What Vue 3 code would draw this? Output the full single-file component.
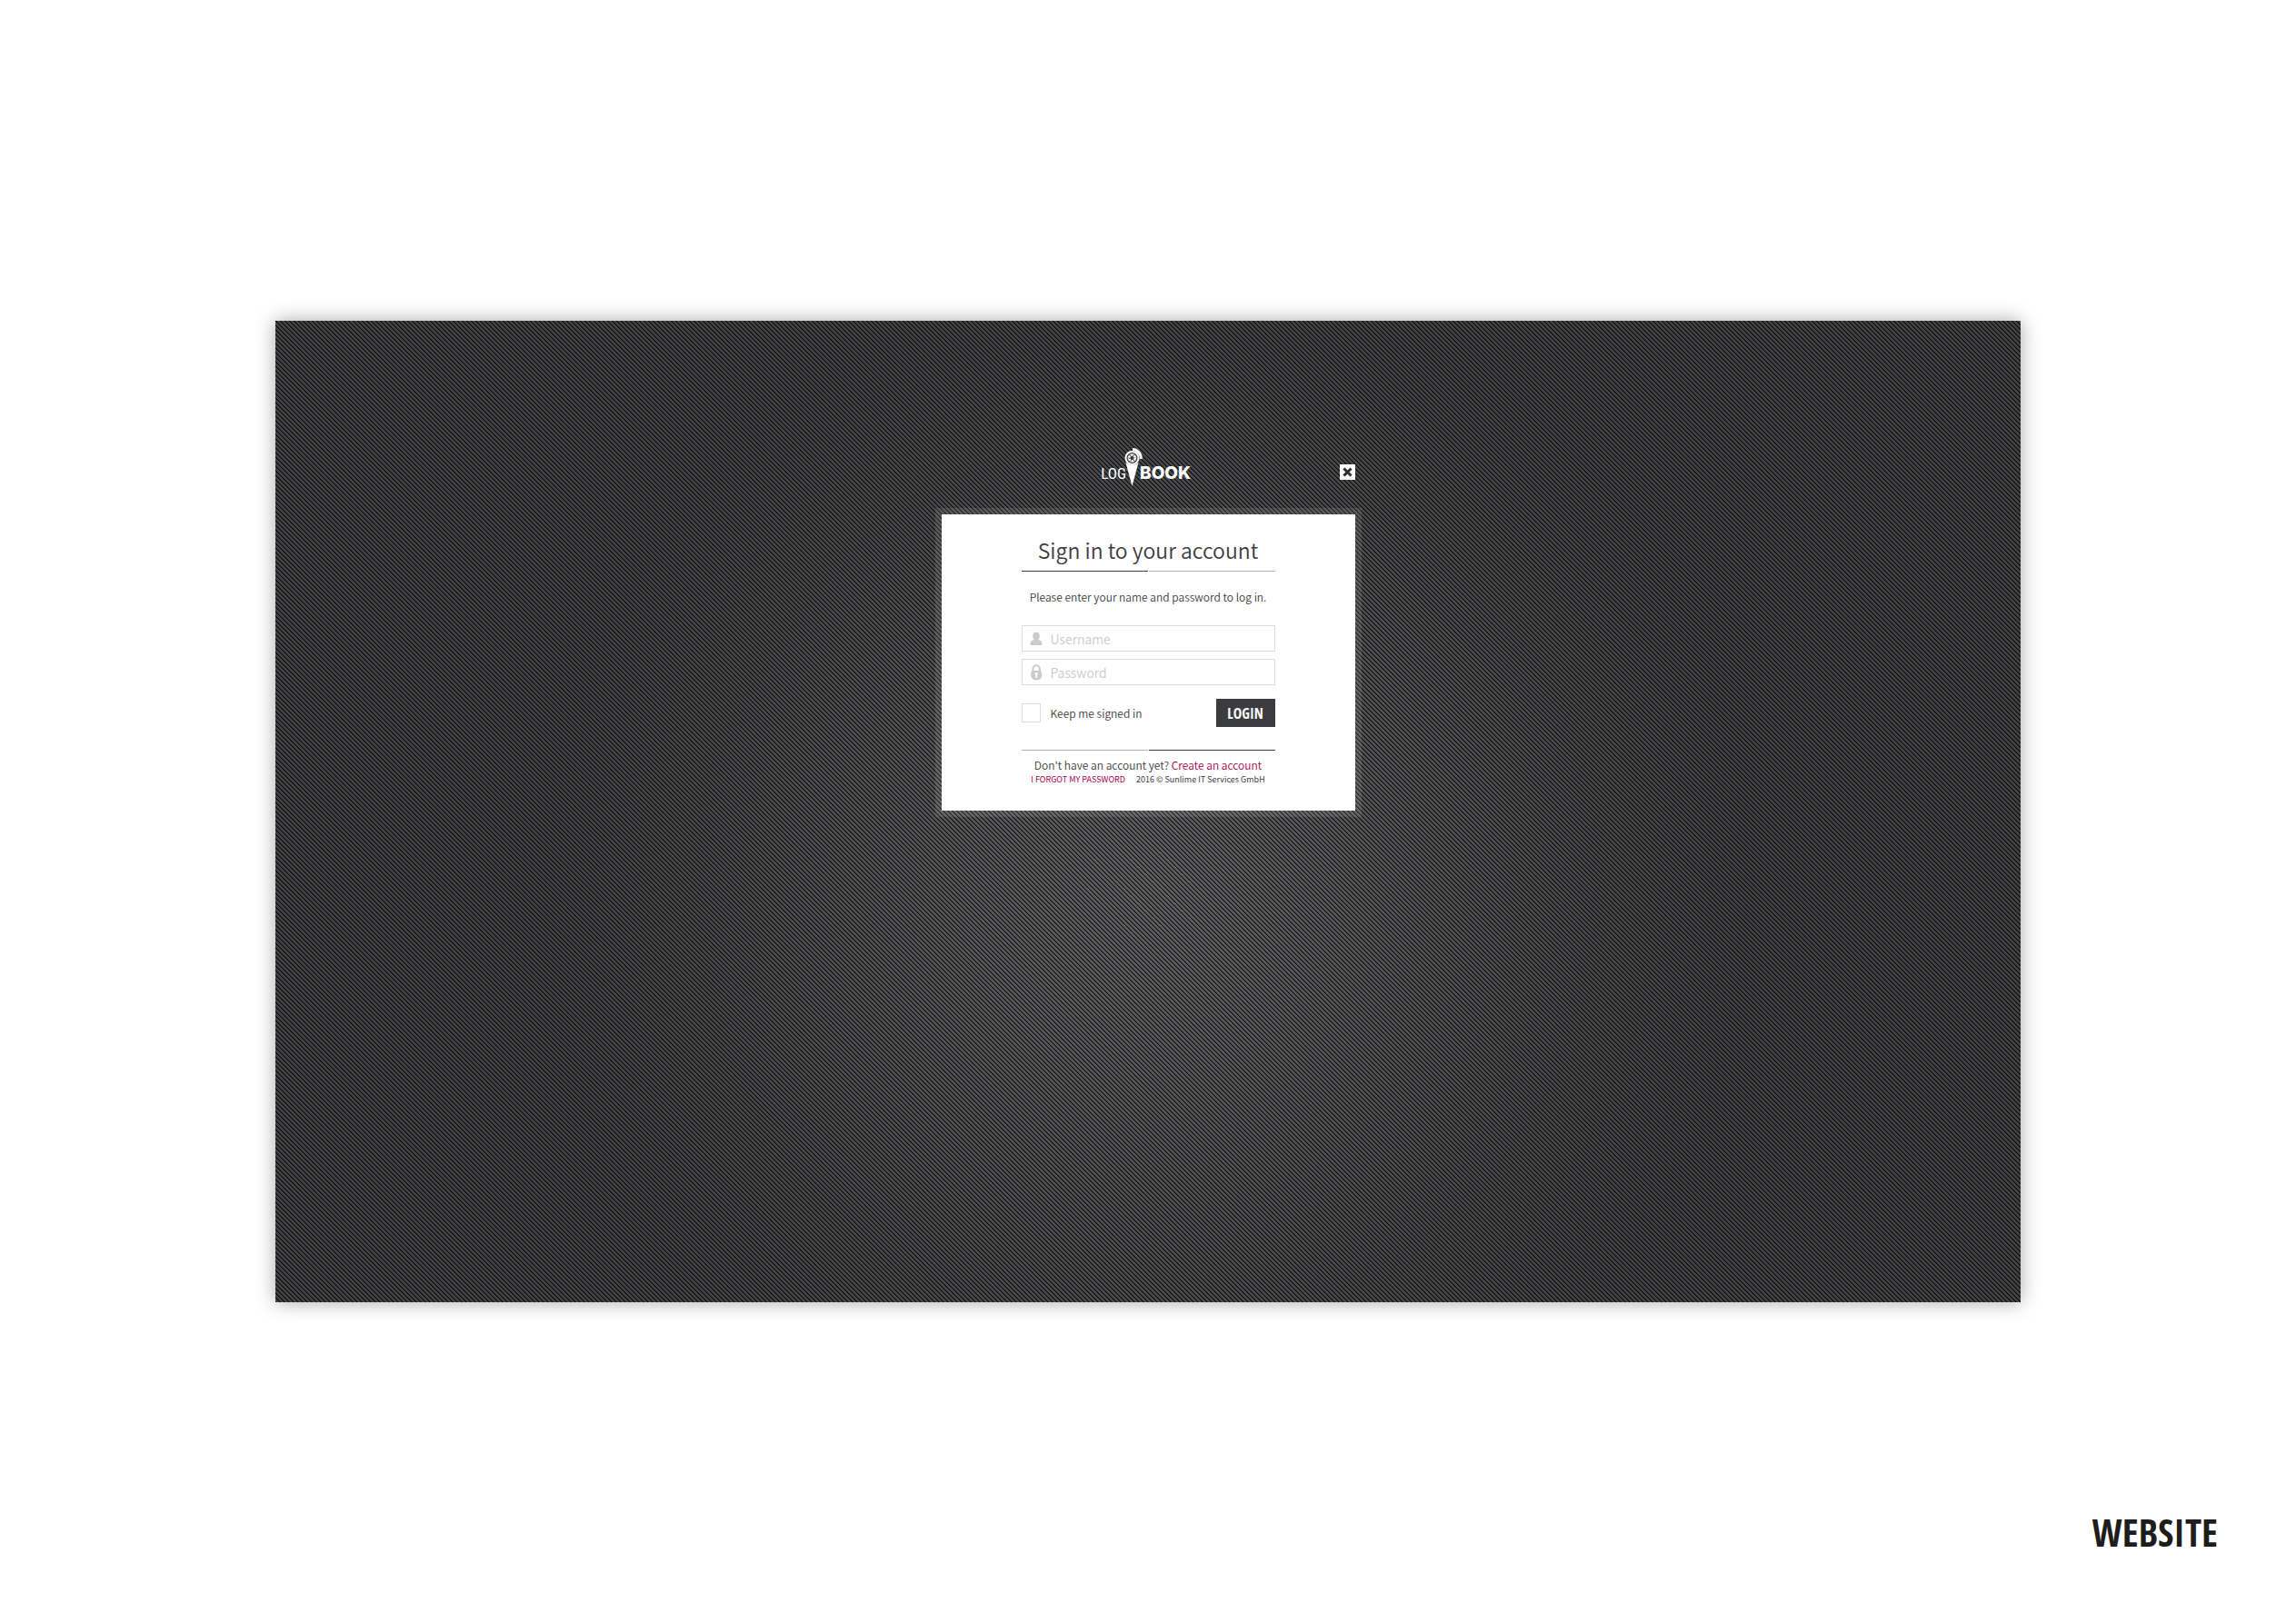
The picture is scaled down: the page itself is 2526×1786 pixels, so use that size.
<script setup>
import { ref } from 'vue'

const username = ref('')
const password = ref('')
const keepSignedIn = ref(false)
</script>

<template>
  <main class="page">
    <section class="stage">
      <div class="dialog">
        <header class="top">
          <svg class="logo" viewBox="0 0 98 42" role="img" aria-label="Logbook">
            <text class="log" x="25" y="34" text-anchor="end">LOG</text>
            <text class="book" x="40" y="34">BOOK</text>
            <path d="M24.5 16 Q31.5 22 38.5 16 L31.5 42 Z" fill="#fff" />
            <circle cx="31.5" cy="11" r="7" fill="#3a3a3c" stroke="#fff" stroke-width="2" />
            <circle cx="31.5" cy="11" r="3" fill="none" stroke="#fff" stroke-width="2" stroke-dasharray="2.2 0.94" />
            <circle cx="31.5" cy="11" r="4.3" fill="none" stroke="#fff" stroke-width="1" />
            <path d="M32 1.5 A9.7 9.7 0 0 1 41.2 12" fill="none" stroke="#fff" stroke-width="3" />
          </svg>
          <button class="close" type="button" aria-label="Close">
            <svg viewBox="0 0 17 17"><path d="M5.5 5.5 L11.5 11.5 M11.5 5.5 L5.5 11.5" stroke="#2f2f31" stroke-width="3" stroke-linecap="square" /></svg>
          </button>
        </header>

        <div class="card">
          <form class="form" @submit.prevent>
            <h1>Sign in to your account</h1>
            <div class="rule"><i class="dark"></i><i></i></div>
            <p class="intro">Please enter your name and password to log in.</p>

            <div class="fields">
              <label class="field">
                <svg viewBox="0 0 14 18" aria-hidden="true">
                  <ellipse cx="7" cy="6" rx="3.8" ry="4.2" />
                  <path d="M5 8 H9 V10 C12 10.6 13.5 11.5 13.5 16 H0.5 C0.5 11.5 2 10.6 5 10 Z" />
                </svg>
                <input v-model="username" type="text" placeholder="Username" aria-label="Username" />
              </label>
              <label class="field">
                <svg viewBox="0 0 14 18" aria-hidden="true">
                  <path d="M3.5 8 V5 A3.7 3.7 0 0 1 10.9 5 V8" fill="none" stroke="#cbcbcb" stroke-width="2" />
                  <path fill-rule="evenodd" d="M2.5 7 H11.9 C13.8 9 13.8 13 12 15.5 Q10.5 17.5 7.2 17.5 Q3.9 17.5 2.4 15.5 C0.6 13 0.6 9 2.5 7 Z M7.2 9 A1.6 1.6 0 0 0 6.3 12 V15 H8.1 V12 A1.6 1.6 0 0 0 7.2 9 Z" />
                </svg>
                <input v-model="password" type="password" placeholder="Password" aria-label="Password" />
              </label>
            </div>

            <div class="actions">
              <label class="keep"><input v-model="keepSignedIn" type="checkbox" />Keep me signed in</label>
              <button class="login" type="submit">LOGIN</button>
            </div>

            <div class="rule"><i></i><i class="dark"></i></div>
            <p class="signup">Don't have an account yet? <a href="#create">Create an account</a></p>
            <p class="legal"><a href="#forgot">I FORGOT MY PASSWORD</a><span>2016 © Sunlime IT Services GmbH</span></p>
          </form>
        </div>
      </div>
    </section>
    <footer>WEBSITE</footer>
  </main>
</template>

<style>
body {
  margin: 0;
  background: #fff;
}
</style>

<style scoped>
.page {
  box-sizing: border-box;
  min-height: 100vh;
  padding: 353px 0 76px;
  display: flex;
  flex-direction: column;
  justify-content: space-between;
  color: #3c3c3e;
  font-family: "Noto Sans CJK SC", "Noto Sans", sans-serif;
  font-weight: 350;
}
.stage {
  box-sizing: border-box;
  margin: 0 303px;
  padding-top: 140px;
  aspect-ratio: 16 / 9;
  display: flex;
  justify-content: center;
  align-items: flex-start;
  background:
    url("data:image/svg+xml,%3Csvg xmlns='http://www.w3.org/2000/svg' width='5' height='5' shape-rendering='crispEdges'%3E%3Cpath d='M0 0h1v1h1v1h1v1h1v1h1v1h-1v-1h-1v-1h-1v-1h-1v-1h-1z' fill='%23000' fill-opacity='.85'/%3E%3Cpath d='M1 0h1v1h1v1h1v1h1v1h-1v-1h-1v-1h-1v-1h-1zM0 4h1v1h-1z' fill='%23000' fill-opacity='.4'/%3E%3C/svg%3E"),
    radial-gradient(circle 660px at 50% 58%, #606063, #58585b 30%, #48484b 75%, #434346);
  box-shadow: 0 0 20px rgba(0, 0, 0, 0.35);
}
.dialog {
  width: 455px;
}
.top {
  position: relative;
  display: flex;
  justify-content: center;
  margin-bottom: 31px;
}
.logo {
  width: 98px;
  height: 42px;
  overflow: visible;
}
.logo text {
  fill: #fff;
}
.log {
  font: 400 17px "Roboto Condensed", Roboto, sans-serif;
}
.book {
  font: 800 19px Inter, sans-serif;
}
.close {
  position: absolute;
  right: 0;
  top: 18px;
  width: 17px;
  height: 17px;
  padding: 0;
  border: 0;
  background: #fff;
}
.close svg {
  display: block;
}
.card {
  display: flex;
  justify-content: center;
  padding: 24px 0 28px;
  background: #fff;
  box-shadow: 0 0 0 7px rgba(255, 255, 255, 0.1);
}
.form {
  width: 279px;
  text-align: center;
}
h1 {
  margin: 0 0 8px;
  font-size: 23px;
  font-weight: 350;
  line-height: 30px;
}
.rule {
  display: flex;
  gap: 1px;
}
.rule i {
  flex: 1;
  height: 1px;
  background: #b0b0b0;
}
.rule .dark {
  background: #3c3c3e;
}
p {
  margin: 0;
  white-space: nowrap;
}
.intro {
  margin: 20px 0 23px;
  font-size: 12px;
  line-height: 16px;
}
.fields {
  display: flex;
  flex-direction: column;
  gap: 8px;
}
.field {
  box-sizing: border-box;
  height: 29px;
  display: flex;
  align-items: center;
  gap: 9px;
  padding-left: 8px;
  border: 1px solid #dcdcdc;
}
.field svg {
  width: 14px;
  height: 18px;
  fill: #cbcbcb;
}
.field input {
  flex: 1;
  min-width: 0;
  padding: 0;
  border: 0;
  outline: 0;
  background: none;
  color: inherit;
  font: inherit;
  font-size: 14px;
  line-height: 20px;
}
.field input::placeholder {
  color: #cbcbcb;
}
.actions {
  display: flex;
  justify-content: space-between;
  align-items: center;
  margin: 15px 0 25px;
}
.keep {
  display: flex;
  align-items: center;
  gap: 11px;
  font-size: 12px;
  line-height: 16px;
}
.keep input {
  appearance: none;
  width: 21px;
  height: 21px;
  margin: 0;
  border: 1px solid #dcdcdc;
  background: #fff;
}
.keep input:checked {
  background: #3c3c3e;
}
.login {
  width: 65px;
  height: 31px;
  padding: 0;
  border: 0;
  background: #3c3c3e;
  color: #fff;
  font: 700 16px "Open Sans Condensed", "Roboto Condensed", sans-serif;
}
a {
  color: #a8004f;
  text-decoration: none;
}
.signup {
  margin: 8px 0 2px;
  font-size: 12px;
  line-height: 16px;
}
.legal {
  display: flex;
  justify-content: center;
  gap: 12px;
  font-size: 9px;
  font-weight: 400;
  line-height: 12px;
}
footer {
  padding-right: 86px;
  text-align: right;
  color: #1d1d1b;
  font: 700 42px/48px "Open Sans Condensed", "Roboto Condensed", sans-serif;
}
</style>
